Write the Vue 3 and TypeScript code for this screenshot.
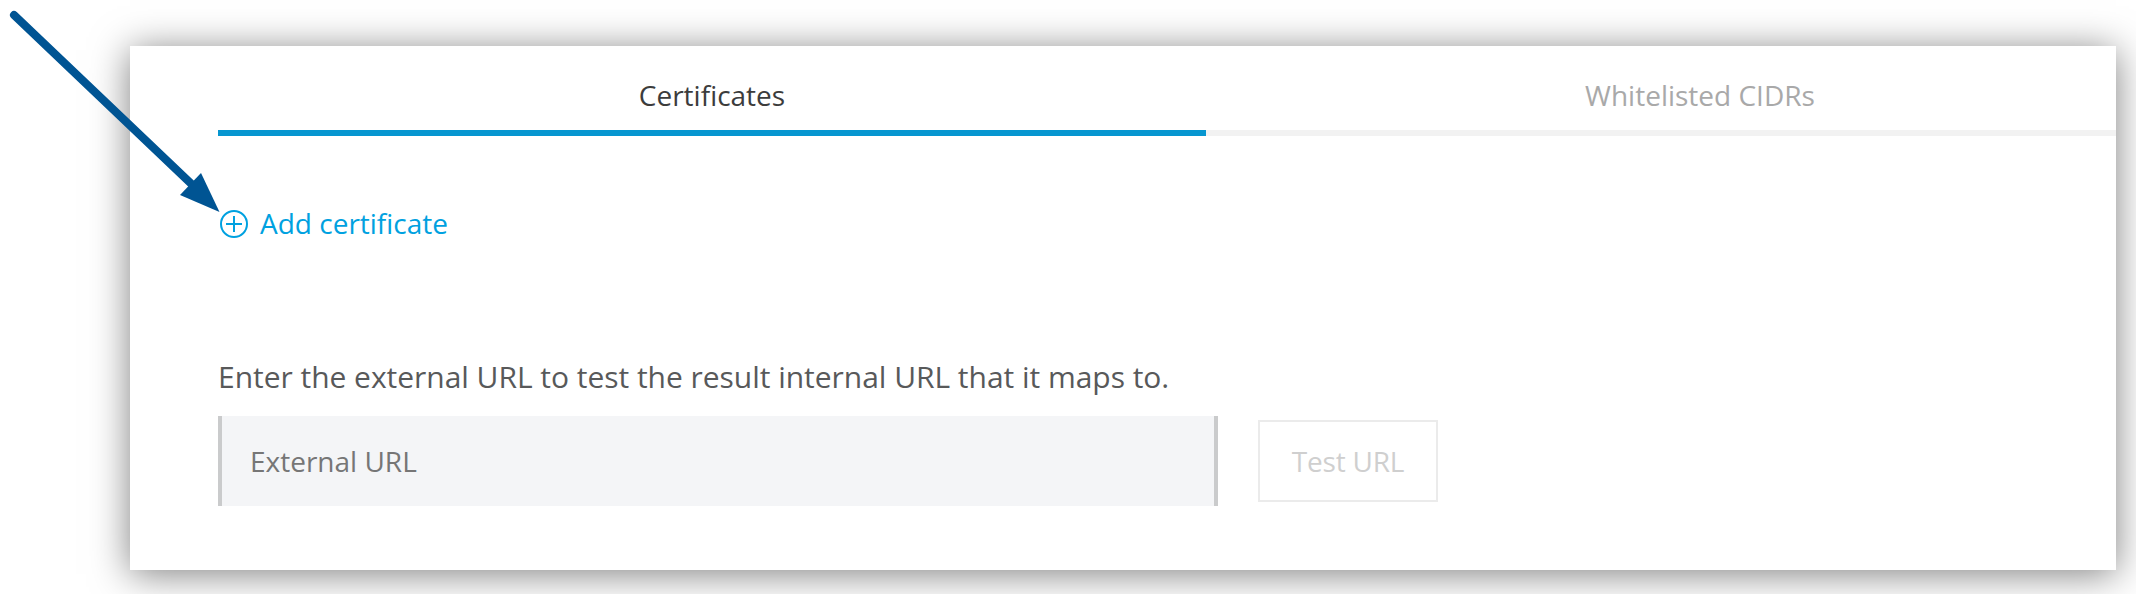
<script setup lang="ts">
import { ref } from 'vue'

interface Tab {
  id: string
  label: string
}

const tabs: Tab[] = [
  { id: 'certificates', label: 'Certificates' },
  { id: 'cidrs', label: 'Whitelisted CIDRs' },
]
const activeTab = ref('certificates')
const externalUrl = ref('')
</script>

<template>
  <main class="page">
    <section class="panel">
      <nav class="tabs">
        <button
          v-for="tab in tabs"
          :key="tab.id"
          type="button"
          class="tab"
          :class="{ active: tab.id === activeTab }"
          @click="activeTab = tab.id"
        >
          {{ tab.label }}
        </button>
      </nav>

      <button type="button" class="add">
        <svg class="add-icon" width="28" height="28" viewBox="0 0 28 28" fill="none" stroke="currentColor" stroke-width="2">
          <circle cx="14" cy="14" r="13" />
          <path d="M6 14h16M14 6v16" />
        </svg>
        <span class="add-label">Add certificate</span>
      </button>

      <p class="hint">Enter the external URL to test the result internal URL that it maps to.</p>

      <div class="row">
        <input v-model="externalUrl" class="url" type="text" placeholder="External URL" />
        <button type="button" class="test" :disabled="!externalUrl">Test URL</button>
      </div>
    </section>

    <svg class="arrow" width="230" height="230" viewBox="0 0 230 230">
      <path d="M14 15L192 184.5" fill="none" stroke="#005493" stroke-width="8" stroke-linecap="round" />
      <path d="M219.5 212L180 195L201 173Z" fill="#005493" />
    </svg>
  </main>
</template>

<style>
body {
  margin: 0;
  background: #fff;
}
</style>

<style scoped>
.page {
  position: relative;
  box-sizing: border-box;
  width: 2136px;
  height: 594px;
  padding: 46px 20px 24px 130px;
  overflow: hidden;
  background: #fff;
  font-family: 'Open Sans', 'Noto Sans', sans-serif;
}

.panel {
  box-sizing: border-box;
  height: 524px;
  padding-left: 88px;
  background: #fff;
  box-shadow: 0 4px 36px rgba(0, 0, 0, 0.5);
}

button,
input {
  box-sizing: border-box;
  margin: 0;
  padding: 0;
  border: 0;
  border-radius: 0;
  background: none;
  font: inherit;
}

.tabs {
  display: flex;
  height: 90px;
  overflow: hidden;
}

.tab {
  flex: 0 0 988px;
  padding-top: 14px;
  border-bottom: 6px solid #f2f2f2;
  color: #a9a9a9;
  font-size: 28px;
  line-height: 38px;
}

.tab.active {
  border-bottom-color: #0696d0;
  color: #3c3c3c;
}

.add {
  display: flex;
  align-items: center;
  gap: 12px;
  height: 40px;
  margin-top: 68px;
  padding-left: 2px;
  color: #00a1e0;
  font-size: 28px;
  line-height: 38px;
}

.add-icon {
  flex: none;
}

.add-label {
  padding-bottom: 2px;
}

.hint {
  margin: 112px 0 0;
  color: #58595a;
  font-size: 30px;
  line-height: 41px;
  letter-spacing: -0.03px;
}

.row {
  display: flex;
  align-items: center;
  gap: 40px;
  margin-top: 19px;
}

.url {
  width: 1000px;
  height: 90px;
  padding: 0 28px;
  border: solid #cacbcc;
  border-width: 0 4px;
  outline: 0;
  background: #f4f5f7;
  color: #58595a;
  font-size: 28px;
}

.url::placeholder {
  color: #767676;
  opacity: 1;
}

.test {
  width: 180px;
  height: 82px;
  border: 2px solid #ebebeb;
  color: #cfcfcf;
  font-size: 28px;
  letter-spacing: -0.2px;
}

.arrow {
  position: absolute;
  top: 0;
  left: 0;
  pointer-events: none;
}
</style>
